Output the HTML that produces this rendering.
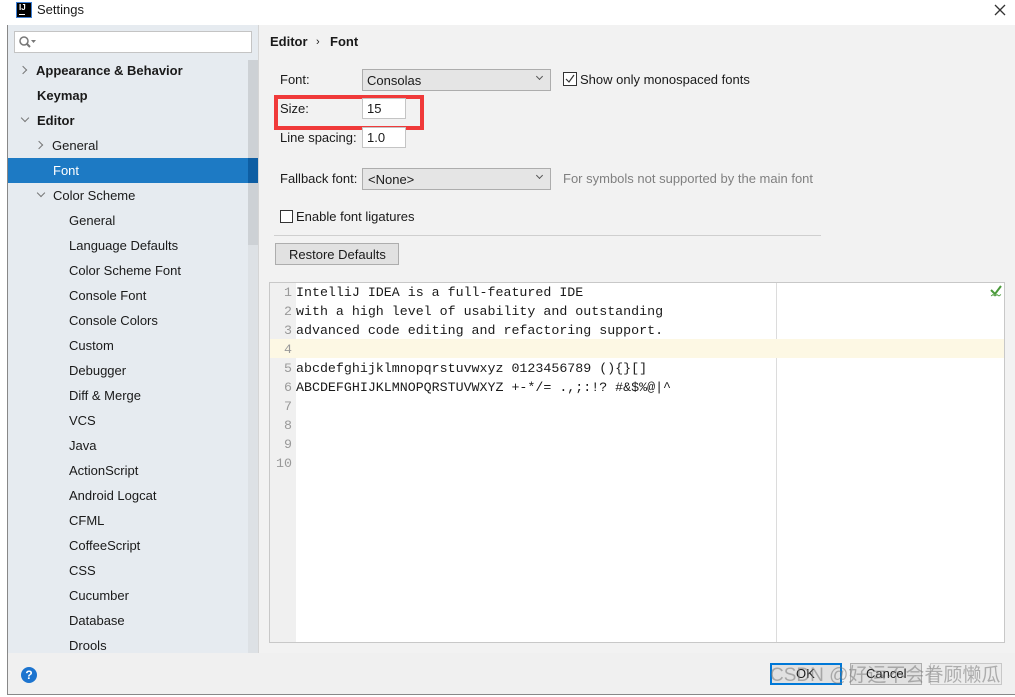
<!DOCTYPE html>
<html><head><style>
*{margin:0;padding:0;box-sizing:border-box}
body{width:1015px;height:697px;background:#fff;font-family:"Liberation Sans","Noto Sans CJK SC",sans-serif;font-size:13px;color:#1a1a1a;position:relative;overflow:hidden}
.a{position:absolute}
.t{position:absolute;white-space:nowrap;line-height:16px}
.tree .t{font-size:13px}
.b{font-weight:bold}
.chev{position:absolute;width:6px;height:6px;border-right:1.5px solid #777;border-bottom:1.5px solid #777}
.mono{font-family:"Liberation Mono",monospace;font-size:13.3px;line-height:19px;white-space:pre;position:absolute}
.ln{font-family:"Liberation Mono",monospace;font-size:13.3px;line-height:19px;color:#999;position:absolute;left:270px;width:22px;text-align:right}
</style></head><body>
<div class="a" style="left:0;top:0;width:1015px;height:25px;background:#fff"></div>
<div class="a" style="left:16px;top:2px;width:16px;height:16px;background:#000;border:1px solid #3c7fd6;color:#fff;font-size:8px;font-weight:bold;line-height:9px;padding-left:2px">IJ<div style="width:6px;height:1px;background:#fff;margin-top:2px"></div></div>
<div class="t" style="left:37px;top:2px;font-size:13px">Settings</div>
<svg class="a" style="left:994px;top:4px" width="12" height="12"><path d="M1 1L11 11M11 1L1 11" stroke="#333" stroke-width="1.3"/></svg>
<div class="a" style="left:7px;top:25px;width:1px;height:670px;background:#888"></div>
<div class="a" style="left:7px;top:694px;width:1008px;height:1px;background:#888"></div>
<div class="a" style="left:8px;top:25px;width:250px;height:628px;background:#e6ebf0"></div>
<div class="a" style="left:258px;top:25px;width:1px;height:628px;background:#d5d5d5"></div>
<div class="a" style="left:14px;top:31px;width:238px;height:22px;background:#fff;border:1px solid #c4c4c4"></div>
<svg class="a" style="left:18px;top:35px" width="20" height="14"><circle cx="6" cy="6" r="4" fill="none" stroke="#777" stroke-width="1.5"/><path d="M9 9L12 12" stroke="#777" stroke-width="2"/><path d="M13 5h5l-2.5 3z" fill="#777"/></svg>
<div class="a" style="left:248px;top:60px;width:10px;height:593px;background:#dde1e5"></div>
<div class="a" style="left:248px;top:60px;width:10px;height:185px;background:#cdd1d5"></div>
<div class="a" style="left:8px;top:158px;width:248px;height:25px;background:#1d7ac4"></div>
<div class="a" style="left:248px;top:158px;width:10px;height:25px;background:#0e5ea3"></div>
<div class="tree">
<div class="chev" style="left:20px;top:67px;transform:rotate(-45deg)"></div>
<div class="t b" style="left:36px;top:63px">Appearance &amp; Behavior</div>
<div class="t b" style="left:37px;top:88px">Keymap</div>
<div class="chev" style="left:22px;top:115px;transform:rotate(45deg)"></div>
<div class="t b" style="left:37px;top:113px">Editor</div>
<div class="chev" style="left:36px;top:142px;transform:rotate(-45deg)"></div>
<div class="t" style="left:52px;top:138px">General</div>
<div class="t" style="left:53px;top:163px;color:#fff">Font</div>
<div class="chev" style="left:38px;top:190px;transform:rotate(45deg)"></div>
<div class="t" style="left:53px;top:188px">Color Scheme</div>
<div class="t" style="left:69px;top:213px">General</div>
<div class="t" style="left:69px;top:238px">Language Defaults</div>
<div class="t" style="left:69px;top:263px">Color Scheme Font</div>
<div class="t" style="left:69px;top:288px">Console Font</div>
<div class="t" style="left:69px;top:313px">Console Colors</div>
<div class="t" style="left:69px;top:338px">Custom</div>
<div class="t" style="left:69px;top:363px">Debugger</div>
<div class="t" style="left:69px;top:388px">Diff &amp; Merge</div>
<div class="t" style="left:69px;top:413px">VCS</div>
<div class="t" style="left:69px;top:438px">Java</div>
<div class="t" style="left:69px;top:463px">ActionScript</div>
<div class="t" style="left:69px;top:488px">Android Logcat</div>
<div class="t" style="left:69px;top:513px">CFML</div>
<div class="t" style="left:69px;top:538px">CoffeeScript</div>
<div class="t" style="left:69px;top:563px">CSS</div>
<div class="t" style="left:69px;top:588px">Cucumber</div>
<div class="t" style="left:69px;top:613px">Database</div>
<div class="t" style="left:69px;top:638px">Drools</div>
</div>
<div class="a" style="left:259px;top:25px;width:756px;height:628px;background:#f2f2f2"></div>
<div class="t b" style="left:270px;top:34px">Editor</div>
<div class="t" style="left:316px;top:34px;font-size:11px">›</div>
<div class="t b" style="left:330px;top:34px">Font</div>
<div class="t" style="left:280px;top:72px">Font:</div>
<div class="a" style="left:362px;top:69px;width:189px;height:22px;background:#e5e5e5;border:1px solid #adadad"></div>
<div class="t" style="left:367px;top:73px">Consolas</div>
<div class="chev" style="left:537px;top:74px;transform:rotate(45deg);border-color:#555;width:5px;height:5px;border-width:1px"></div>
<div class="a" style="left:563px;top:72px;width:14px;height:14px;border:1px solid #333;background:#fff"></div>
<svg class="a" style="left:563px;top:72px" width="14" height="14"><path d="M3 7L6 10L11 3" fill="none" stroke="#333" stroke-width="1.2"/></svg>
<div class="t" style="left:580px;top:72px">Show only monospaced fonts</div>
<div class="a" style="left:274px;top:95px;width:150px;height:35px;border:4px solid #f03a3a"></div>
<div class="t" style="left:280px;top:101px">Size:</div>
<div class="a" style="left:362px;top:98px;width:44px;height:21px;background:#fff;border:1px solid #c4c4c4"></div>
<div class="t" style="left:367px;top:101px">15</div>
<div class="t" style="left:280px;top:130px">Line spacing:</div>
<div class="a" style="left:362px;top:127px;width:44px;height:21px;background:#fff;border:1px solid #c4c4c4"></div>
<div class="t" style="left:367px;top:130px">1.0</div>
<div class="t" style="left:280px;top:171px">Fallback font:</div>
<div class="a" style="left:362px;top:168px;width:189px;height:22px;background:#e5e5e5;border:1px solid #adadad"></div>
<div class="t" style="left:368px;top:172px">&lt;None&gt;</div>
<div class="chev" style="left:537px;top:173px;transform:rotate(45deg);border-color:#555;width:5px;height:5px;border-width:1px"></div>
<div class="t" style="left:563px;top:171px;color:#808080">For symbols not supported by the main font</div>
<div class="a" style="left:280px;top:210px;width:13px;height:13px;border:1px solid #333;background:#fff"></div>
<div class="t" style="left:296px;top:209px">Enable font ligatures</div>
<div class="a" style="left:274px;top:235px;width:547px;height:1px;background:#cfcfcf"></div>
<div class="a" style="left:275px;top:243px;width:124px;height:22px;background:#e1e1e1;border:1px solid #adadad"></div>
<div class="t" style="left:289px;top:247px">Restore Defaults</div>
<div class="a" style="left:269px;top:282px;width:736px;height:361px;background:#fff;border:1px solid #c8c8c8"></div>
<div class="a" style="left:270px;top:283px;width:26px;height:359px;background:#f0f0f0"></div>
<div class="a" style="left:776px;top:283px;width:1px;height:359px;background:#dcdcdc"></div>
<div class="a" style="left:270px;top:339px;width:734px;height:19px;background:#fdf8e4"></div>
<div class="ln" style="top:283px">1<br>2<br>3<br>4<br>5<br>6<br>7<br>8<br>9<br>10</div>
<div class="mono" style="left:296px;top:283px">IntelliJ IDEA is a full-featured IDE
with a high level of usability and outstanding
advanced code editing and refactoring support.

abcdefghijklmnopqrstuvwxyz 0123456789 (){}[]
ABCDEFGHIJKLMNOPQRSTUVWXYZ +-*/= .,;:!? #&amp;$%@|^</div>
<svg class="a" style="left:990px;top:285px" width="12" height="12"><path d="M1 5L5 9L11 1" fill="none" stroke="#4a9a3a" stroke-width="2"/><path d="M1 11l2-1.5 2 1.5 2-1.5 2 1.5 2-1.5" fill="none" stroke="#4a9a3a" stroke-width="0.8"/></svg>
<div class="a" style="left:8px;top:653px;width:1007px;height:41px;background:#f0f0f0"></div>
<div class="a" style="left:21px;top:667px;width:16px;height:16px;border-radius:50%;background:#1c74cf;color:#fff;font-size:12px;font-weight:bold;text-align:center;line-height:16px">?</div>
<div class="a" style="left:770px;top:663px;width:72px;height:22px;background:#e1e1e1;border:2px solid #0078d7"></div>
<div class="t" style="left:796px;top:666px">OK</div>
<div class="a" style="left:850px;top:663px;width:72px;height:22px;background:#e1e1e1;border:1px solid #adadad"></div>
<div class="t" style="left:866px;top:666px">Cancel</div>
<div class="a" style="left:930px;top:663px;width:72px;height:22px;background:#ececec;border:1px solid #c8c8c8"></div>
<div class="t" style="left:770px;top:665px;font-size:19px;color:rgba(120,120,120,0.55);line-height:22px">CSDN @好运不会眷顾懒瓜</div>
</body></html>
